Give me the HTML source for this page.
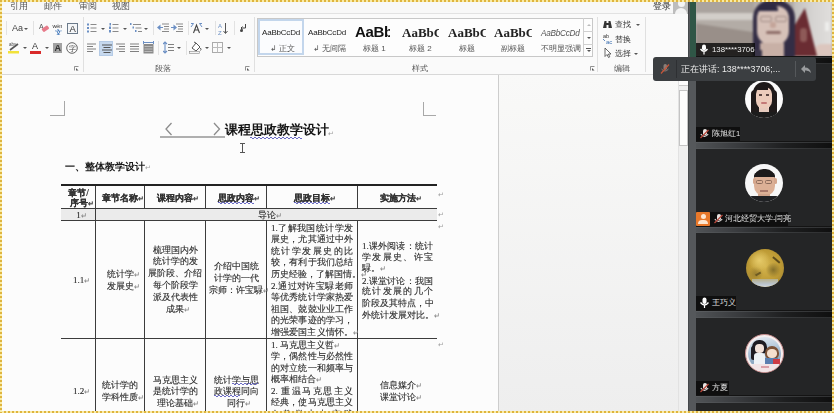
<!DOCTYPE html>
<html><head><meta charset="utf-8">
<style>
*{margin:0;padding:0;box-sizing:border-box}
html,body{width:834px;height:413px;overflow:hidden;background:#fafafa;font-family:"Liberation Sans",sans-serif;position:relative}
.a{position:absolute}
.t{position:absolute;white-space:nowrap;line-height:1}
#ft{left:0;top:0;width:834px;height:2px;background:repeating-linear-gradient(90deg,#dfb43e 0 2px,#f9eca6 2px 4px);z-index:50}
#fb{left:0;top:411px;width:834px;height:2px;background:repeating-linear-gradient(90deg,#dfb43e 0 2px,#f9eca6 2px 4px);z-index:50}
#fl{left:0;top:0;width:2px;height:413px;background:repeating-linear-gradient(180deg,#dfb43e 0 2px,#f9eca6 2px 4px);z-index:50}
#fr{left:832px;top:0;width:2px;height:413px;background:repeating-linear-gradient(180deg,#dfb43e 0 2px,#f9eca6 2px 4px);z-index:50}
.tab{font-size:8.5px;color:#555;top:1.5px}
.sep{position:absolute;width:1px;background:#e2e2e2}
.dd{position:absolute;width:0;height:0;border-left:2px solid transparent;border-right:2px solid transparent;border-top:2px solid #555}
.gl{font-size:8px;color:#555}
.ln{position:absolute;background:#3c3c3c}
.doc{position:absolute;white-space:nowrap;line-height:1;font-family:"Liberation Serif",serif;font-size:9px;color:#222;-webkit-text-stroke:0.12px #444;margin-top:1px}
.j{text-align:justify;text-align-last:justify}
.c{text-align:center}
.pm{color:#9a9a9a;font-size:7px;font-family:"Liberation Sans",sans-serif;display:inline-block;width:0;overflow:visible}
.av{position:absolute;border-radius:50%;overflow:hidden}
.av div{position:absolute;filter:blur(0.7px)}
#root{position:absolute;left:0;top:0;width:834px;height:413px;will-change:transform}
</style></head><body><div id="root">
<div id="ft" class="a"></div><div id="fb" class="a"></div><div id="fl" class="a"></div><div id="fr" class="a"></div>

<!-- tab row -->
<div class="a" style="left:0;top:0;width:688px;height:14px;background:#f8f8f8;border-bottom:1px solid #e2e2e2"></div>
<div class="t tab" style="left:10px">引用</div>
<div class="t tab" style="left:44px">邮件</div>
<div class="t tab" style="left:79px">审阅</div>
<div class="t tab" style="left:112px">视图</div>
<div class="t tab" style="left:653px;color:#555;-webkit-text-stroke:0.15px #555">登录</div>
<div class="a" style="left:673px;top:2px;width:16px;height:12px;background:#bdbdbd;overflow:hidden">
  <div class="a" style="left:4.5px;top:-2px;width:7px;height:7px;border-radius:50%;background:#f4f4f4"></div>
  <div class="a" style="left:2px;top:6px;width:12px;height:9px;border-radius:6px 6px 0 0;background:#f4f4f4"></div>
</div>

<!-- ribbon -->
<div class="a" style="left:0;top:14px;width:688px;height:61px;background:#fafafa;border-bottom:1px solid #d8d8d8"></div>

<!-- group 1 -->
<div class="sep" style="left:6px;top:21px;height:14px"></div>
<div class="t" style="left:12px;top:24px;font-size:9px;color:#444">Aa</div>
<div class="dd" style="left:24px;top:28px"></div>
<div class="sep" style="left:33px;top:21px;height:14px"></div>
<svg class="a" style="left:39px;top:22px" width="11" height="12" viewBox="0 0 11 12"><text x="0" y="7" font-size="7" fill="#555" font-family="Liberation Sans">A</text><rect x="3" y="5" width="7" height="4" rx="1" transform="rotate(-35 6 7)" fill="#e77a8a"/></svg>
<svg class="a" style="left:52px;top:22px" width="13" height="13" viewBox="0 0 13 13"><text x="0.5" y="5.5" font-size="5.5" fill="#333" font-family="Liberation Sans" letter-spacing="-0.2">wén</text><text x="3" y="12.5" font-size="6.5" fill="#3a73b8" font-family="Liberation Sans" font-weight="bold">文</text></svg>
<div class="a" style="left:67px;top:23px;width:11px;height:11px;border:1px solid #6b7a8a;background:#f4f6f8"></div>
<div class="t" style="left:69.5px;top:24px;font-size:9.5px;color:#333">A</div>
<!-- row 2 -->
<svg class="a" style="left:7px;top:41px" width="14" height="13" viewBox="0 0 14 13"><text x="2" y="5" font-size="4.5" fill="#444" font-family="Liberation Sans">aby</text><line x1="3" y1="9" x2="11" y2="3" stroke="#555" stroke-width="1.6"/><rect x="1" y="10" width="11" height="2.5" fill="#f2e23a"/></svg>
<div class="dd" style="left:23px;top:47px"></div>
<div class="t" style="left:32px;top:42px;font-size:9px;color:#333">A</div>
<div class="a" style="left:30px;top:51px;width:11px;height:2.5px;background:#d92a2a"></div>
<div class="dd" style="left:45px;top:47px"></div>
<div class="a" style="left:53px;top:43px;width:9px;height:10px;background:#a2a2a2"></div>
<div class="t" style="left:54.5px;top:43.5px;font-size:9px;color:#333;font-weight:bold">A</div>
<svg class="a" style="left:65.5px;top:41.5px" width="12" height="12" viewBox="0 0 12 12"><circle cx="6" cy="6" r="5.3" stroke="#555" stroke-width="0.9" fill="none"/><text x="2.6" y="8.7" font-size="6.8" fill="#444" font-family="Liberation Sans">字</text></svg>
<svg class="a" style="left:74px;top:66px" width="5" height="5" viewBox="0 0 5 5"><path d="M0.5 4.5 V0.5 H4.5" stroke="#777" stroke-width="0.8" fill="none"/><path d="M2 2 L4.5 4.5 H2 Z" fill="#555"/></svg>
<div class="sep" style="left:83px;top:17px;height:55px;background:#e0e0e0"></div>

<!-- group 2 paragraph -->
<svg class="a" style="left:87px;top:23px" width="10" height="10" viewBox="0 0 10 10"><g fill="#6b8fc4"><rect x="0" y="0.5" width="2" height="2"/><rect x="0" y="4" width="2" height="2"/><rect x="0" y="7.5" width="2" height="2"/></g><g fill="#8a8a8a"><rect x="3.5" y="1" width="6" height="1"/><rect x="3.5" y="4.5" width="6" height="1"/><rect x="3.5" y="8" width="6" height="1"/></g></svg>
<div class="dd" style="left:101px;top:28px"></div>
<svg class="a" style="left:109px;top:23px" width="10" height="10" viewBox="0 0 10 10"><g fill="#6b8fc4"><rect x="0.5" y="0" width="1.5" height="2.5"/><rect x="0" y="3.5" width="2" height="2.5"/><rect x="0" y="7" width="2" height="2.5"/></g><g fill="#8a8a8a"><rect x="3.5" y="1" width="6" height="1"/><rect x="3.5" y="4.5" width="6" height="1"/><rect x="3.5" y="8" width="6" height="1"/></g></svg>
<div class="dd" style="left:123px;top:28px"></div>
<svg class="a" style="left:130px;top:23px" width="13" height="10" viewBox="0 0 13 10"><g fill="#6b8fc4"><rect x="0" y="0" width="1.5" height="2"/><rect x="2.5" y="3.5" width="1.5" height="2"/><rect x="5" y="7" width="1.5" height="2"/></g><g fill="#8a8a8a"><rect x="3" y="1" width="8" height="1"/><rect x="5.5" y="4.5" width="6" height="1"/><rect x="8" y="8" width="4" height="1"/></g></svg>
<div class="dd" style="left:144px;top:28px"></div>
<div class="sep" style="left:153px;top:21px;height:14px"></div>
<svg class="a" style="left:157px;top:23px" width="12" height="10" viewBox="0 0 12 10"><g fill="#8a8a8a"><rect x="5" y="0.5" width="7" height="1"/><rect x="7" y="3" width="5" height="1"/><rect x="7" y="5.5" width="5" height="1"/><rect x="5" y="8" width="7" height="1"/></g><path d="M0 4.5 L3.5 1.5 V7.5 Z" fill="#6b8fc4"/><rect x="2" y="4" width="4" height="1" fill="#6b8fc4"/></svg>
<svg class="a" style="left:171px;top:23px" width="12" height="10" viewBox="0 0 12 10"><g fill="#8a8a8a"><rect x="5" y="0.5" width="7" height="1"/><rect x="7" y="3" width="5" height="1"/><rect x="7" y="5.5" width="5" height="1"/><rect x="5" y="8" width="7" height="1"/></g><path d="M6 4.5 L2.5 1.5 V7.5 Z" fill="#6b8fc4"/><rect x="0" y="4" width="4" height="1" fill="#6b8fc4"/></svg>
<div class="sep" style="left:188px;top:21px;height:14px"></div>
<svg class="a" style="left:190px;top:22px" width="13" height="12" viewBox="0 0 13 12"><path d="M3.5 11 L6.5 3 L9.5 11 M4.6 8 H8.4" stroke="#444" stroke-width="1.1" fill="none"/><path d="M1 5 L3.5 1.5 M12 5 L9.5 1.5 M1 1.5 H3.5 M12 1.5 H9.5" stroke="#6b8fc4" stroke-width="1" fill="none"/></svg>
<div class="dd" style="left:205px;top:28px"></div>
<div class="sep" style="left:215px;top:21px;height:14px"></div>
<svg class="a" style="left:218px;top:22px" width="10" height="13" viewBox="0 0 10 13"><text x="0" y="6" font-size="6" fill="#6b8fc4" font-family="Liberation Sans">A</text><text x="0" y="12.5" font-size="6" fill="#6b8fc4" font-family="Liberation Sans">Z</text><path d="M7.5 1 V11 M5.5 9 L7.5 11.5 L9.5 9" stroke="#555" stroke-width="1" fill="none"/></svg>
<div class="sep" style="left:234px;top:21px;height:14px"></div>
<svg class="a" style="left:239px;top:23px" width="8" height="10" viewBox="0 0 8 10"><path d="M6.5 1 V5 H2 M3.5 3.5 L2 5 L3.5 6.5" stroke="#444" stroke-width="1" fill="none"/><circle cx="2.5" cy="7.5" r="1.5" fill="#444"/></svg>
<!-- row 2 -->
<svg class="a" style="left:87px;top:43px" width="10" height="9" viewBox="0 0 10 9"><g fill="#808080"><rect x="0" y="0.5" width="9" height="1"/><rect x="0" y="3" width="6" height="1"/><rect x="0" y="5.5" width="9" height="1"/><rect x="0" y="8" width="6" height="1"/></g></svg>
<div class="a" style="left:99px;top:41px;width:14px;height:15px;background:#c7d9ee;border:1px solid #b5cbe6"></div>
<svg class="a" style="left:101.5px;top:44px" width="10" height="9" viewBox="0 0 10 9"><g fill="#555"><rect x="0" y="0.5" width="10" height="1"/><rect x="1.5" y="3" width="7" height="1"/><rect x="0" y="5.5" width="10" height="1"/><rect x="1.5" y="8" width="7" height="1"/></g></svg>
<svg class="a" style="left:116px;top:43px" width="10" height="9" viewBox="0 0 10 9"><g fill="#808080"><rect x="0" y="0.5" width="9" height="1"/><rect x="3" y="3" width="6" height="1"/><rect x="0" y="5.5" width="9" height="1"/><rect x="3" y="8" width="6" height="1"/></g></svg>
<svg class="a" style="left:130px;top:43px" width="10" height="9" viewBox="0 0 10 9"><g fill="#808080"><rect x="0" y="0.5" width="9" height="1"/><rect x="0" y="3" width="9" height="1"/><rect x="0" y="5.5" width="9" height="1"/><rect x="0" y="8" width="9" height="1"/></g></svg>
<svg class="a" style="left:143px;top:41px" width="11" height="13" viewBox="0 0 11 13"><rect x="0.5" y="3" width="10" height="9.5" fill="#8a8a8a"/><g fill="#bbb"><rect x="1.5" y="5" width="8" height="1"/><rect x="1.5" y="7.5" width="8" height="1"/><rect x="1.5" y="10" width="8" height="1"/></g><path d="M0.5 1.5 H10.5 M0.5 0 V3 M10.5 0 V3" stroke="#6b8fc4" stroke-width="1"/></svg>
<div class="sep" style="left:158px;top:41px;height:14px"></div>
<svg class="a" style="left:163px;top:41px" width="11" height="13" viewBox="0 0 11 13"><path d="M2 1 V12 M0 3 L2 1 L4 3 M0 10 L2 12 L4 10" stroke="#6b8fc4" stroke-width="1.1" fill="none"/><g fill="#808080"><rect x="5" y="3" width="6" height="1"/><rect x="5" y="6" width="6" height="1"/><rect x="5" y="9" width="6" height="1"/></g></svg>
<div class="dd" style="left:177px;top:47px"></div>
<div class="sep" style="left:186px;top:41px;height:14px"></div>
<svg class="a" style="left:189px;top:40px" width="13" height="14" viewBox="0 0 13 14"><path d="M3 8 L7 3 L11 7 L7 11 Z" fill="#fff" stroke="#555" stroke-width="1"/><path d="M5 2 L7 3" stroke="#555"/><rect x="0.5" y="11.5" width="10" height="2" fill="#f5f5f5" stroke="#888" stroke-width="0.6"/><path d="M11.5 8 Q12.5 10 11.5 10.5" stroke="#555" fill="none"/></svg>
<div class="dd" style="left:205px;top:47px"></div>
<svg class="a" style="left:212px;top:42px" width="11" height="11" viewBox="0 0 11 11"><rect x="0.5" y="0.5" width="10" height="10" fill="none" stroke="#aaa" stroke-width="1"/><path d="M5.5 0.5 V10.5 M0.5 5.5 H10.5" stroke="#bbb" stroke-width="1"/></svg>
<div class="dd" style="left:227px;top:47px"></div>
<div class="t gl" style="left:155px;top:65px">段落</div>
<svg class="a" style="left:245px;top:66px" width="5" height="5" viewBox="0 0 5 5"><path d="M0.5 4.5 V0.5 H4.5" stroke="#777" stroke-width="0.8" fill="none"/><path d="M2 2 L4.5 4.5 H2 Z" fill="#555"/></svg>
<div class="sep" style="left:254px;top:17px;height:55px;background:#e0e0e0"></div>

<!-- group 3 styles -->
<div class="a" style="left:257px;top:18px;width:336px;height:39px;border:1px solid #c8c8c8;background:#fdfdfd"></div>
<div class="a" style="left:258px;top:19px;width:46px;height:36px;border:2px solid #c3d6ec;background:#fbfcfe"></div>
<div class="a" style="left:583px;top:18px;width:10px;height:39px;border-left:1px solid #d0d0d0"></div>
<div class="a" style="left:583px;top:31px;width:10px;height:1px;background:#d0d0d0"></div>
<div class="a" style="left:583px;top:44px;width:10px;height:1px;background:#d0d0d0"></div>
<div class="a" style="left:586.5px;top:24px;width:0;height:0;border-left:2px solid transparent;border-right:2px solid transparent;border-bottom:2px solid #bbb"></div>
<div class="dd" style="left:586.5px;top:37px"></div>
<div class="a" style="left:586px;top:48px;width:5px;height:1px;background:#555"></div>
<div class="dd" style="left:586.5px;top:50px"></div>
<div class="t" style="left:262px;top:29px;font-size:8px;color:#222;letter-spacing:-0.2px">AaBbCcDd</div>
<div class="t gl" style="left:270px;top:44.5px;color:#555">↲ 正文</div>
<div class="t" style="left:308px;top:29px;font-size:8px;color:#222;letter-spacing:-0.2px">AaBbCcDd</div>
<div class="t gl" style="left:313px;top:44.5px;color:#555">↲ 无间隔</div>
<div class="t" style="left:355px;font-size:15px;font-weight:bold;color:#111;top:24px;letter-spacing:-0.3px;width:35px;overflow:hidden">AaBb</div>
<div class="t gl" style="left:363px;top:44.5px;color:#555">标题 1</div>
<div class="t" style="left:402px;font-size:13px;font-weight:bold;color:#222;font-family:Liberation Serif;top:26px;width:37px;overflow:hidden">AaBbC</div>
<div class="t gl" style="left:409px;top:44.5px;color:#555">标题 2</div>
<div class="t" style="left:448px;font-size:13px;font-weight:bold;color:#222;font-family:Liberation Serif;top:26px;width:38px;overflow:hidden">AaBbC</div>
<div class="t gl" style="left:459px;top:44.5px;color:#555">标题</div>
<div class="t" style="left:494px;font-size:13px;font-weight:bold;color:#222;font-family:Liberation Serif;top:26px;width:38px;overflow:hidden">AaBbC</div>
<div class="t gl" style="left:501px;top:44.5px;color:#555">副标题</div>
<div class="t" style="left:541px;top:29.5px;font-size:8.2px;font-style:italic;color:#555;letter-spacing:-0.25px">AaBbCcDd</div>
<div class="t gl" style="left:541px;top:44.5px;color:#555;font-size:7.5px">不明显强调</div>

<div class="t gl" style="left:412px;top:65px">样式</div>
<svg class="a" style="left:590px;top:66px" width="5" height="5" viewBox="0 0 5 5"><path d="M0.5 4.5 V0.5 H4.5" stroke="#777" stroke-width="0.8" fill="none"/><path d="M2 2 L4.5 4.5 H2 Z" fill="#555"/></svg>
<div class="sep" style="left:597px;top:17px;height:55px;background:#e0e0e0"></div>
<!-- group 4 editing -->
<svg class="a" style="left:602px;top:19px" width="11" height="10" viewBox="0 0 11 10"><path d="M1 9 L2.5 2 H4.5 V9 Z M10 9 L8.5 2 H6.5 V9 Z" fill="#333"/><rect x="4" y="4" width="3" height="2" fill="#333"/></svg>
<div class="t gl" style="left:615px;top:21px;color:#333;font-size:8px">查找</div>
<div class="dd" style="left:636px;top:24px"></div>
<svg class="a" style="left:602px;top:33px" width="12" height="12" viewBox="0 0 12 12"><text x="1" y="5" font-size="5.5" fill="#333" font-family="Liberation Sans">ab</text><text x="4" y="11" font-size="6" fill="#3c6fb0" font-family="Liberation Sans">ac</text><path d="M1 6 L3 8" stroke="#3c6fb0" stroke-width="0.8"/></svg>
<div class="t gl" style="left:615px;top:35.7px;color:#333;font-size:8px">替换</div>
<svg class="a" style="left:604px;top:47px" width="8" height="11" viewBox="0 0 8 11"><path d="M1 1 V9.5 L3 7.5 L4.5 10.5 L5.8 9.8 L4.4 7 H7 Z" fill="#fff" stroke="#444" stroke-width="0.8"/></svg>
<div class="t gl" style="left:615px;top:49.7px;color:#333;font-size:8px">选择</div>
<div class="dd" style="left:634px;top:53px"></div>
<div class="t gl" style="left:614px;top:65px">编辑</div>
<div class="sep" style="left:645px;top:17px;height:55px;background:#e0e0e0"></div>

<!-- document area -->
<div class="a" style="left:0;top:75px;width:498px;height:338px;background:#fcfcfc"></div>
<div class="a" style="left:498px;top:75px;width:1px;height:338px;background:#cdcdcd"></div>
<div class="a" style="left:499px;top:75px;width:180px;height:338px;background:linear-gradient(180deg,#f9f9f8,#eeeeee)"></div>
<div class="a" style="left:678px;top:75px;width:10px;height:338px;background:#efefef;border-left:1px solid #e2e2e2"></div>
<div class="a" style="left:679px;top:78px;width:9px;height:8px;background:#fdfdfd;border-bottom:1px solid #c8c8c8"></div>
<div class="a" style="left:678.5px;top:90px;width:9px;height:56px;background:#fdfdfd;border:1px solid #c4c4c4"></div>

<div class="a" style="left:64px;top:101px;width:1px;height:15px;background:#a8a8a8"></div>
<div class="a" style="left:50px;top:115px;width:15px;height:1px;background:#a8a8a8"></div>
<div class="a" style="left:423px;top:102px;width:1px;height:14px;background:#a8a8a8"></div>
<div class="a" style="left:423px;top:115px;width:13px;height:1px;background:#a8a8a8"></div>
<svg class="a" style="left:160px;top:120px" width="66" height="19" viewBox="0 0 66 19"><path d="M11.5 3 L6 9 L11.5 15 M54 3 L59.5 9 L54 15" stroke="#8c8c8c" stroke-width="1.3" fill="none"/><rect x="0" y="16.2" width="65" height="1.6" fill="#9c9c9c"/></svg>
<div class="t" style="left:225px;top:124px;font-size:12.8px;font-weight:bold;color:#151515">课程思政教学设计</div>
<div class="t pm" style="left:328px;top:130px">↵</div>
<svg class="a" style="left:250px;top:136px" width="53" height="3" viewBox="0 0 53 3"><path d="M0 2 Q1 0 2 2 T4 2 T6 2 T8 2 T10 2 T12 2 T14 2 T16 2 T18 2 T20 2 T22 2 T24 2 T26 2 T28 2 T30 2 T32 2 T34 2 T36 2 T38 2 T40 2 T42 2 T44 2 T46 2 T48 2 T50 2 T52 2" stroke="#5a5ac0" stroke-width="0.9" fill="none"/></svg>
<div class="a" style="left:242px;top:143px;width:1px;height:10px;background:#555"></div>
<div class="a" style="left:240px;top:143px;width:5px;height:1px;background:#555"></div>
<div class="a" style="left:240px;top:152px;width:5px;height:1px;background:#555"></div>
<div class="t" style="left:65px;top:161.5px;font-size:10.45px;font-weight:bold;color:#1a1a1a">一、整体教学设计<span class="pm" style="font-weight:normal">↵</span></div>
<div class="ln" style="left:61px;top:184px;width:376px;height:2px;background:#222"></div>
<div class="ln" style="left:61px;top:208px;width:376px;height:1px"></div>
<div class="a" style="left:61px;top:209px;width:376px;height:11px;background:#ebebeb"></div>
<div class="ln" style="left:61px;top:220px;width:376px;height:1px"></div>
<div class="ln" style="left:61px;top:338px;width:376px;height:1px"></div>
<div class="ln" style="left:95px;top:186px;width:1px;height:227px"></div>
<div class="ln" style="left:144px;top:186px;width:1px;height:22px"></div>
<div class="ln" style="left:144px;top:220px;width:1px;height:193px"></div>
<div class="ln" style="left:205px;top:186px;width:1px;height:22px"></div>
<div class="ln" style="left:205px;top:220px;width:1px;height:193px"></div>
<div class="ln" style="left:266px;top:186px;width:1px;height:22px"></div>
<div class="ln" style="left:266px;top:220px;width:1px;height:193px"></div>
<div class="ln" style="left:357px;top:186px;width:1px;height:22px"></div>
<div class="ln" style="left:357px;top:220px;width:1px;height:193px"></div>
<div class="doc c" style="left:62px;top:188px;width:33px;font-size:9.4px;font-weight:bold;-webkit-text-stroke:0.1px #333;">章节/</div>
<div class="doc c" style="left:62px;top:198px;width:33px;font-size:9.4px;font-weight:bold;-webkit-text-stroke:0.1px #333;">序号<span class='pm'>↵</span></div>
<div class="doc c" style="left:96px;top:192.5px;width:48px;font-size:9.4px;font-weight:bold;-webkit-text-stroke:0.1px #333;">章节名称<span class='pm'>↵</span></div>
<div class="doc c" style="left:145px;top:192.5px;width:60px;font-size:9.4px;font-weight:bold;-webkit-text-stroke:0.1px #333;">课程内容<span class='pm'>↵</span></div>
<div class="doc c" style="left:206px;top:192.5px;width:60px;font-size:9.4px;font-weight:bold;-webkit-text-stroke:0.1px #333;">思政内容<span class='pm'>↵</span></div>
<div class="doc c" style="left:267px;top:192.5px;width:90px;font-size:9.4px;font-weight:bold;-webkit-text-stroke:0.1px #333;">思政目标<span class='pm'>↵</span></div>
<div class="doc c" style="left:358px;top:192.5px;width:79px;font-size:9.4px;font-weight:bold;-webkit-text-stroke:0.1px #333;">实施方法<span class='pm'>↵</span></div>
<div class="t pm" style="left:437.5px;top:191px">↵</div>
<div class="doc c" style="left:62px;top:209.5px;width:33px;">1<span class='pm'>↵</span></div>
<div class="doc c" style="left:96px;top:209.5px;width:341px">导论<span class='pm'>↵</span></div>
<div class="t pm" style="left:437.5px;top:211px">↵</div>
<div class="doc c" style="left:62px;top:275px;width:33px;">1.1<span class='pm'>↵</span></div>
<div class="doc c" style="left:96px;top:268.5px;width:48px;">统计学<span class='pm'>↵</span></div>
<div class="doc c" style="left:96px;top:280.5px;width:48px;">发展史<span class='pm'>↵</span></div>
<div class="doc c" style="left:145px;top:244.5px;width:60px;">梳理国内外</div>
<div class="doc c" style="left:145px;top:256.35px;width:60px;">统计学的发</div>
<div class="doc c" style="left:145px;top:268.2px;width:60px;">展阶段、介绍</div>
<div class="doc c" style="left:145px;top:280.05px;width:60px;">每个阶段学</div>
<div class="doc c" style="left:145px;top:291.9px;width:60px;">派及代表性</div>
<div class="doc c" style="left:145px;top:303.75px;width:60px;">成果<span class='pm'>↵</span></div>
<div class="doc c" style="left:206px;top:260.5px;width:60px;">介绍中国统</div>
<div class="doc c" style="left:206px;top:272.7px;width:60px;">计学的一代</div>
<div class="doc c" style="left:206px;top:284.9px;width:60px;">宗师：许宝騄<span class='pm'>↵</span></div>
<div class="doc j" style="left:271px;top:222.5px;width:82px;">1.了解我国统计学发</div>
<div class="doc j" style="left:271px;top:234.1px;width:82px;">展史，尤其通过中外</div>
<div class="doc j" style="left:271px;top:245.7px;width:82px;">统计学发展史的比</div>
<div class="doc j" style="left:271px;top:257.3px;width:82px;">较，有利于我们总结</div>
<div class="doc j" style="left:271px;top:268.9px;width:82px;">历史经验，了解国情。<span class='pm'>↵</span></div>
<div class="doc j" style="left:271px;top:280.5px;width:82px;">2.通过对许宝騄老师</div>
<div class="doc j" style="left:271px;top:292.1px;width:82px;">等优秀统计学家热爱</div>
<div class="doc j" style="left:271px;top:303.7px;width:82px;">祖国、兢兢业业工作</div>
<div class="doc j" style="left:271px;top:315.3px;width:82px;">的光荣事迹的学习，</div>
<div class="doc j" style="left:271px;top:326.9px;width:82px;">增强爱国主义情怀。<span class='pm'>↵</span></div>
<div class="doc j" style="left:362px;top:241px;width:71px">1.课外阅读：统计</div>
<div class="doc j" style="left:362px;top:252px;width:71px">学发展史、许宝</div>
<div class="doc " style="left:362px;top:263px;width:71px">騄。<span class='pm'>↵</span></div>
<div class="doc j" style="left:362px;top:276.3px;width:71px">2.课堂讨论：我国</div>
<div class="doc j" style="left:362px;top:286px;width:71px">统计发展的几个</div>
<div class="doc j" style="left:362px;top:298px;width:71px">阶段及其特点，中</div>
<div class="doc " style="left:362px;top:310px;width:71px">外统计发展对比。<span class='pm'>↵</span></div>
<div class="doc c" style="left:62px;top:385.5px;width:33px;">1.2<span class='pm'>↵</span></div>
<div class="doc c" style="left:96px;top:379.5px;width:48px;">统计学的</div>
<div class="doc c" style="left:96px;top:391.5px;width:48px;">学科性质<span class='pm'>↵</span></div>
<div class="doc c" style="left:145px;top:374.5px;width:60px;">马克思主义</div>
<div class="doc c" style="left:145px;top:386.0px;width:60px;">是统计学的</div>
<div class="doc c" style="left:145px;top:397.5px;width:60px;">理论基础<span class='pm'>↵</span></div>
<div class="doc c" style="left:206px;top:374.5px;width:60px;">统计学与思</div>
<div class="doc c" style="left:206px;top:386.0px;width:60px;">政课程同向</div>
<div class="doc c" style="left:206px;top:397.5px;width:60px;">同行<span class='pm'>↵</span></div>
<div class="doc " style="left:271px;top:339.5px;width:82px;">1. 马克思主义哲<span class='pm'>↵</span></div>
<div class="doc j" style="left:271px;top:351.0px;width:82px;">学，偶然性与必然性</div>
<div class="doc j" style="left:271px;top:362.5px;width:82px;">的对立统一和频率与</div>
<div class="doc " style="left:271px;top:374.0px;width:82px;">概率相结合<span class='pm'>↵</span></div>
<div class="doc j" style="left:271px;top:385.5px;width:82px;">2. 重温马克思主义</div>
<div class="doc j" style="left:271px;top:397.0px;width:82px;">经典，使马克思主义</div>
<div class="doc j" style="left:271px;top:408.5px;width:82px;">在教学中与实践</div>
<div class="doc c" style="left:358px;top:380px;width:79px;">信息媒介<span class='pm'>↵</span></div>
<div class="doc c" style="left:358px;top:391.5px;width:79px;">课堂讨论<span class='pm'>↵</span></div>
<svg class="a" style="left:218px;top:200.5px" width="36" height="3" viewBox="0 0 36 3"><path d="M0 2 Q1 0 2 2 T4 2 T6 2 T8 2 T10 2 T12 2 T14 2 T16 2 T18 2 T20 2 T22 2 T24 2 T26 2 T28 2 T30 2 T32 2 T34 2 T36 2" stroke="#5a5ac0" stroke-width="0.9" fill="none"/></svg>
<svg class="a" style="left:294px;top:200.5px" width="36" height="3" viewBox="0 0 36 3"><path d="M0 2 Q1 0 2 2 T4 2 T6 2 T8 2 T10 2 T12 2 T14 2 T16 2 T18 2 T20 2 T22 2 T24 2 T26 2 T28 2 T30 2 T32 2 T34 2 T36 2" stroke="#5a5ac0" stroke-width="0.9" fill="none"/></svg>
<svg class="a" style="left:232px;top:382px" width="26" height="3" viewBox="0 0 26 3"><path d="M0 2 Q1 0 2 2 T4 2 T6 2 T8 2 T10 2 T12 2 T14 2 T16 2 T18 2 T20 2 T22 2 T24 2 T26 2" stroke="#5a5ac0" stroke-width="0.9" fill="none"/></svg>
<svg class="a" style="left:214px;top:393.5px" width="27" height="3" viewBox="0 0 27 3"><path d="M0 2 Q1 0 2 2 T4 2 T6 2 T8 2 T10 2 T12 2 T14 2 T16 2 T18 2 T20 2 T22 2 T24 2 T26 2" stroke="#5a5ac0" stroke-width="0.9" fill="none"/></svg>
<div class="t pm" style="left:437.5px;top:223px">↵</div>
<div class="t pm" style="left:437.5px;top:341px">↵</div>

<div class="a" style="left:688px;top:0;width:144px;height:413px;background:#55585b;border-left:1.5px solid #44474a"></div>
<!-- tile 1 video with green border -->
<div class="a" style="left:689.5px;top:0;width:142.5px;height:57px;background:#2f5646"></div>
<div class="a" style="left:696px;top:0;width:136px;height:55.5px;overflow:hidden;background:#b5afaa">
 <div class="a" style="left:0;top:0;width:136px;height:56px;filter:blur(0.9px)">
  <div class="a" style="left:0;top:0;width:60px;height:13px;background:#aaa39e"></div>
  <div class="a" style="left:0;top:13px;width:60px;height:7px;background:#d2cec9"></div>
  <div class="a" style="left:0;top:20px;width:60px;height:36px;background:#b3aca6"></div>
  <div class="a" style="left:0;top:20px;width:60px;height:36px;background:#998f89;clip-path:polygon(0 10%,100% 35%,100% 100%,0 100%)"></div>
  <div class="a" style="left:58px;top:0;width:40px;height:8px;background:#b4aeaa"></div>
  <div class="a" style="left:98px;top:0;width:38px;height:56px;background:linear-gradient(90deg,#c2bfbc,#d6d4d2 50%,#e0dedc)"></div>
  <div class="a" style="left:129px;top:22px;width:4px;height:9px;background:#eeeeec"></div>
  <div class="a" style="left:118px;top:44px;width:18px;height:12px;background:#dcc6be;border-radius:8px 0 0 0"></div>
  <div class="a" style="left:99px;top:8px;width:22px;height:48px;background:#6a2c32;clip-path:polygon(45% 0,100% 100%,0 100%,0 35%)"></div>
  <div class="a" style="left:104px;top:28px;width:7px;height:14px;background:#8e5a58;border-radius:3px"></div>
  <div class="a" style="left:57px;top:0px;width:42px;height:58px;border-radius:18px 18px 2px 2px;background:#332d45"></div>
  <div class="a" style="left:61px;top:6px;width:32px;height:40px;border-radius:12px 12px 15px 15px;background:#d6c1b8"></div>
  <div class="a" style="left:62px;top:4px;width:20px;height:7px;border-radius:10px 8px 0 0;background:#2d2942"></div>
  <div class="a" style="left:64px;top:16px;width:12px;height:6px;border:1px solid #9f8a84;border-radius:2px"></div>
  <div class="a" style="left:79px;top:16px;width:12px;height:6px;border:1px solid #9f8a84;border-radius:2px"></div>
  <div class="a" style="left:74px;top:22px;width:6px;height:6px;background:#c4a59a;border-radius:2px"></div>
  <div class="a" style="left:70px;top:31px;width:15px;height:3px;border-radius:2px;background:#8e6d68"></div>
  <div class="a" style="left:64px;top:43px;width:24px;height:14px;background:#c8b0a6"></div>
  <div class="a" style="left:58px;top:50px;width:8px;height:7px;background:#3a3548"></div>
 </div>
</div>
<div class="a" style="left:696px;top:43px;width:59px;height:13px;background:rgba(10,10,10,.82)"></div>
<svg class="a" style="left:699px;top:44px" width="10" height="11" viewBox="0 0 10 11"><rect x="3" y="0.5" width="4" height="6" rx="2" fill="#fff"/><path d="M1.5 5 Q5 9.5 8.5 5" stroke="#fff" stroke-width="1.3" fill="none"/><rect x="4.4" y="8" width="1.2" height="2.5" fill="#fff"/></svg>
<div class="t" style="left:712px;top:46px;font-size:7.8px;color:#f0f0f0">138****3706</div>
<!-- tooltip -->
<div class="a" style="left:653px;top:57px;width:163px;height:24px;background:#3b3e41;border-radius:3px;z-index:20"></div>
<div class="a" style="left:676px;top:60px;width:1px;height:18px;background:#2e3033;z-index:21"></div>
<div class="a" style="left:795px;top:61px;width:1px;height:16px;background:#55585b;z-index:21"></div>
<svg class="a" style="left:659px;top:63px;z-index:21" width="12" height="12" viewBox="0 0 12 12"><rect x="4.5" y="1" width="3.5" height="6" rx="1.7" fill="#8a7d78"/><path d="M2.5 6 Q6 10 9.5 6" stroke="#8a7d78" stroke-width="1" fill="none"/><line x1="2" y1="10.5" x2="10" y2="1.5" stroke="#c8563a" stroke-width="1.2"/></svg>
<div class="t" style="left:681px;top:64.5px;font-size:8.9px;color:#eaeaea;z-index:21">正在讲话: 138****3706;...</div>
<svg class="a" style="left:800px;top:64px;z-index:21" width="12" height="10" viewBox="0 0 12 10"><path d="M5 1 L1 5 L5 9 L5 6.5 Q9 6 11 9 Q10 3.5 5 3.5 Z" fill="#9a9c9e"/></svg>
<div class="a" style="left:696px;top:64px;width:136px;height:77px;background:#242526"></div>
<div class="a" style="left:696px;top:56px;width:136px;height:8px;background:linear-gradient(90deg,#505356 0%,#3a3c3f 30%,#1e1f20 65%,#0f0f0f 100%)"></div>
<div class="a" style="left:696px;top:56px;width:136px;height:1px;background:#141414"></div>
<div class="a" style="left:696px;top:57px;width:136px;height:1px;background:linear-gradient(90deg,#5a5d60,#3c3e40 60%,#303132)"></div>
<div class="a" style="left:696px;top:63px;width:136px;height:1px;background:linear-gradient(90deg,#55585b,#3a3c3e 60%,#2e2f30)"></div>
<div class="a" style="left:696px;top:149px;width:136px;height:77px;background:#242526"></div>
<div class="a" style="left:696px;top:141px;width:136px;height:8px;background:linear-gradient(90deg,#505356 0%,#3a3c3f 30%,#1e1f20 65%,#0f0f0f 100%)"></div>
<div class="a" style="left:696px;top:141px;width:136px;height:1px;background:#141414"></div>
<div class="a" style="left:696px;top:142px;width:136px;height:1px;background:linear-gradient(90deg,#5a5d60,#3c3e40 60%,#303132)"></div>
<div class="a" style="left:696px;top:148px;width:136px;height:1px;background:linear-gradient(90deg,#55585b,#3a3c3e 60%,#2e2f30)"></div>
<div class="a" style="left:696px;top:233px;width:136px;height:77px;background:#242526"></div>
<div class="a" style="left:696px;top:226px;width:136px;height:7px;background:linear-gradient(90deg,#505356 0%,#3a3c3f 30%,#1e1f20 65%,#0f0f0f 100%)"></div>
<div class="a" style="left:696px;top:226px;width:136px;height:1px;background:#141414"></div>
<div class="a" style="left:696px;top:227px;width:136px;height:1px;background:linear-gradient(90deg,#5a5d60,#3c3e40 60%,#303132)"></div>
<div class="a" style="left:696px;top:232px;width:136px;height:1px;background:linear-gradient(90deg,#55585b,#3a3c3e 60%,#2e2f30)"></div>
<div class="a" style="left:696px;top:318px;width:136px;height:77px;background:#242526"></div>
<div class="a" style="left:696px;top:310px;width:136px;height:8px;background:linear-gradient(90deg,#505356 0%,#3a3c3f 30%,#1e1f20 65%,#0f0f0f 100%)"></div>
<div class="a" style="left:696px;top:310px;width:136px;height:1px;background:#141414"></div>
<div class="a" style="left:696px;top:311px;width:136px;height:1px;background:linear-gradient(90deg,#5a5d60,#3c3e40 60%,#303132)"></div>
<div class="a" style="left:696px;top:317px;width:136px;height:1px;background:linear-gradient(90deg,#55585b,#3a3c3e 60%,#2e2f30)"></div>
<div class="a" style="left:696px;top:403px;width:136px;height:77px;background:#242526"></div>
<div class="a" style="left:696px;top:395px;width:136px;height:8px;background:linear-gradient(90deg,#505356 0%,#3a3c3f 30%,#1e1f20 65%,#0f0f0f 100%)"></div>
<div class="a" style="left:696px;top:395px;width:136px;height:1px;background:#141414"></div>
<div class="a" style="left:696px;top:396px;width:136px;height:1px;background:linear-gradient(90deg,#5a5d60,#3c3e40 60%,#303132)"></div>
<div class="a" style="left:696px;top:402px;width:136px;height:1px;background:linear-gradient(90deg,#55585b,#3a3c3e 60%,#2e2f30)"></div>
<div class="av" style="left:745px;top:80px;width:38px;height:38px;background:#fbfbfb">
<div style="left:8px;top:2px;width:22px;height:16px;border-radius:11px 11px 2px 2px;background:#1f1a1a"></div>
<div style="left:6px;top:10px;width:8px;height:26px;border-radius:4px 3px 3px 4px;background:#1f1a1a"></div>
<div style="left:24px;top:10px;width:8px;height:26px;border-radius:3px 4px 4px 3px;background:#1f1a1a"></div>
<div style="left:11px;top:7px;width:16px;height:22px;border-radius:8px 8px 9px 9px;background:#eccbbb"></div>
<div style="left:11px;top:5px;width:12px;height:5px;border-radius:6px 6px 0 6px;background:#1f1a1a"></div>
<div style="left:13.5px;top:14px;width:3px;height:1.5px;background:#5a4440"></div>
<div style="left:21px;top:14px;width:3px;height:1.5px;background:#5a4440"></div>
<div style="left:16px;top:22px;width:6px;height:2px;border-radius:1px;background:#c47a78"></div>
<div style="left:14px;top:28px;width:10px;height:5px;background:#e6cabd"></div>
<div style="left:2px;top:32px;width:34px;height:7px;border-radius:8px 8px 0 0;background:#1c1c1c"></div>
</div><div class="a avatar0" style="left:745px;top:79px;width:39px;height:39px;border-radius:50%;overflow:hidden"></div>
<div class="a" style="left:696px;top:127px;width:44px;height:14px;background:#0f0f0f"></div>
<svg class="a" style="left:699px;top:128px" width="11" height="12" viewBox="0 0 11 12"><rect x="4" y="1" width="4" height="6.5" rx="2" fill="#e8e4e2"/><path d="M1.8 6 Q5.5 11 9.2 6" stroke="#e8e4e2" stroke-width="1.1" fill="none"/><line x1="1.5" y1="10" x2="9.5" y2="2" stroke="#b8473a" stroke-width="1.2"/></svg>
<div class="t" style="left:712px;top:130.3px;font-size:7.5px;color:#e6e6e6">陈旭红1</div>
<div class="av" style="left:745px;top:164px;width:38px;height:38px;background:#f7f7f7">
<div style="left:9px;top:5px;width:21px;height:12px;border-radius:10px 10px 3px 3px;background:#1c1a1a"></div>
<div style="left:9px;top:10px;width:21px;height:22px;border-radius:5px 5px 10px 10px;background:#dcb096"></div>
<div style="left:9px;top:8px;width:21px;height:5px;border-radius:8px 8px 1px 1px;background:#1c1a1a"></div>
<div style="left:7.5px;top:14px;width:3px;height:6px;border-radius:2px;background:#d4a68c"></div>
<div style="left:28.5px;top:14px;width:3px;height:6px;border-radius:2px;background:#d4a68c"></div>
<div style="left:11px;top:16px;width:7px;height:4px;border:0.8px solid #8a6a5a;border-radius:1.5px"></div>
<div style="left:20px;top:16px;width:7px;height:4px;border:0.8px solid #8a6a5a;border-radius:1.5px"></div>
<div style="left:15px;top:26px;width:8px;height:1.5px;background:#a8786a"></div>
<div style="left:13px;top:30px;width:12px;height:4px;background:#d0a48c"></div>
<div style="left:1px;top:32px;width:36px;height:7px;border-radius:6px 6px 0 0;background:#202124"></div>
</div><div class="a avatar1" style="left:745px;top:164px;width:39px;height:39px;border-radius:50%;overflow:hidden"></div>
<div class="a" style="left:696px;top:212px;width:14px;height:14px;background:#e8782a;border-radius:1px"><div class="a" style="left:4.5px;top:2px;width:5px;height:5px;border-radius:50%;background:#fde6d0"></div><div class="a" style="left:2px;top:7.5px;width:10px;height:4.5px;border-radius:5px 5px 0 0;background:#fde6d0"></div></div>
<div class="a" style="left:710px;top:212px;width:78px;height:14px;background:#0f0f0f"></div>
<svg class="a" style="left:713px;top:213px" width="11" height="12" viewBox="0 0 11 12"><rect x="4" y="1" width="4" height="6.5" rx="2" fill="#e8e4e2"/><path d="M1.8 6 Q5.5 11 9.2 6" stroke="#e8e4e2" stroke-width="1.1" fill="none"/><line x1="1.5" y1="10" x2="9.5" y2="2" stroke="#b8473a" stroke-width="1.2"/></svg>
<div class="t" style="left:725px;top:215.3px;font-size:7.5px;color:#e6e6e6">河北经贸大学-闫亮</div>
<div class="av" style="left:745.5px;top:248.5px;width:38px;height:38px;background:radial-gradient(circle at 35% 30%,#e6cb6a 0%,rgba(230,203,106,0) 30%),radial-gradient(circle at 72% 55%,#86702a 0%,rgba(134,112,42,0) 22%),radial-gradient(circle at 25% 65%,#9c8030 0%,rgba(156,128,48,0) 20%),radial-gradient(circle at 50% 45%,#d4b44e 0%,#bd9a34 55%,#947a36 100%)">
<div style="left:6px;top:30px;width:26px;height:8px;background:linear-gradient(180deg,#b8b088,#b9c3cc 60%,#d0d6dc)"></div>
<div style="left:26px;top:10px;width:9px;height:1.5px;background:#5d4c1c;transform:rotate(40deg)"></div>
<div style="left:9px;top:24px;width:6px;height:1.5px;background:#6d5a22;transform:rotate(-30deg)"></div>
</div>
</div><div class="a avatar2" style="left:745px;top:248px;width:39px;height:39px;border-radius:50%;overflow:hidden"></div>
<div class="a" style="left:696px;top:296px;width:40px;height:14px;background:#0f0f0f"></div>
<svg class="a" style="left:699px;top:297px" width="11" height="12" viewBox="0 0 11 12"><rect x="3.5" y="0.5" width="4" height="6.5" rx="2" fill="#fff"/><path d="M1.5 5.5 Q5.5 10.5 9.5 5.5" stroke="#fff" stroke-width="1.3" fill="none"/><rect x="4.9" y="8" width="1.2" height="3" fill="#fff"/></svg>
<div class="t" style="left:712px;top:299.3px;font-size:7.5px;color:#e6e6e6">王巧义</div>
<div class="av" style="left:745px;top:333.5px;width:39px;height:39px;background:#f6eeee;border:1px solid #c98f8f">
<div style="left:2px;top:2px;width:33px;height:33px;border-radius:50%;background:linear-gradient(170deg,#e8eef4 0%,#a9c0d6 45%,#8aa6c0 70%,#efe6e8 78%)"></div>
<div style="left:6px;top:5px;width:15px;height:14px;border-radius:7px 7px 5px 5px;background:#1e1b22"></div>
<div style="left:5px;top:11px;width:5px;height:14px;border-radius:3px;background:#1e1b22"></div>
<div style="left:9px;top:9px;width:9px;height:9px;border-radius:45%;background:#f3e2da"></div>
<div style="left:8px;top:18px;width:11px;height:11px;border-radius:3px 3px 0 0;background:#eef2f6"></div>
<div style="left:19px;top:11px;width:14px;height:13px;border-radius:7px 7px 5px 5px;background:#7b5238"></div>
<div style="left:21px;top:14px;width:10px;height:9px;border-radius:45%;background:#f4dfce"></div>
<div style="left:19px;top:23px;width:13px;height:7px;background:#5a7fb0"></div>
<div style="left:27px;top:24px;width:7px;height:6px;background:#cc3a44"></div>
<div style="left:6px;top:29px;width:27px;height:8px;background:#f1e4e6"></div>
<div style="left:15px;top:31px;width:8px;height:2px;background:#d9a0a8"></div>
</div><div class="a avatar3" style="left:745px;top:333px;width:39px;height:39px;border-radius:50%;overflow:hidden"></div>
<div class="a" style="left:696px;top:381px;width:33px;height:14px;background:#0f0f0f"></div>
<svg class="a" style="left:699px;top:382px" width="11" height="12" viewBox="0 0 11 12"><rect x="4" y="1" width="4" height="6.5" rx="2" fill="#e8e4e2"/><path d="M1.8 6 Q5.5 11 9.2 6" stroke="#e8e4e2" stroke-width="1.1" fill="none"/><line x1="1.5" y1="10" x2="9.5" y2="2" stroke="#b8473a" stroke-width="1.2"/></svg>
<div class="t" style="left:712px;top:384.3px;font-size:7.5px;color:#e6e6e6">方夏</div>

</div></body></html>
